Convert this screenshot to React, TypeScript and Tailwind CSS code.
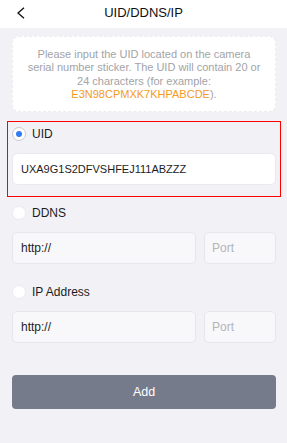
import React from "react";

function Radio({ checked }: { checked?: boolean }) {
  return checked ? (
    <span className="flex h-[14px] w-[14px] items-center justify-center rounded-full border border-[#c8c8cd] bg-white">
      <span className="h-[6px] w-[6px] rounded-full bg-[#2f7df6]" />
    </span>
  ) : (
    <span className="h-[14px] w-[14px] rounded-full border border-[#ececf0] bg-white" />
  );
}

function HostRow() {
  return (
    <div className="flex gap-2">
      <div className="flex h-[32px] flex-1 items-center rounded-[5px] border border-[#e6e6eb] bg-[#f8f8fa] px-2 text-[12px] text-[#1c1c1e]">
        http://
      </div>
      <div className="flex h-[32px] w-[72px] items-center rounded-[5px] border border-[#e6e6eb] bg-[#f8f8fa] px-[7px] text-[12px] text-[#b4b4b9]">
        Port
      </div>
    </div>
  );
}

export default function App() {
  return (
    <div className="min-h-[443px] bg-[#f2f2f6] font-['Liberation_Sans',Arial,sans-serif] text-[#1c1c1e]">
      {/* Header */}
      <div className="grid h-[28px] grid-cols-[40px_1fr_40px] items-center bg-white pb-[3px]">
        <svg className="ml-[16px] h-[12px] w-[10px]" viewBox="0 0 10 12" fill="none" stroke="#111" strokeWidth={1.3}>
          <polyline points="8,0.7 2,6 8,11.3" />
        </svg>
        <div className="text-center text-[13px] text-[#111]">UID/DDNS/IP</div>
        <div />
      </div>

      <div className="pl-3 pr-[11px] pt-2">
        {/* Info card */}
        <div className="rounded-[7px] border border-dashed border-[#ececf0] bg-white pb-[10px] pt-[11px] text-center text-[11px] leading-[13.3px] text-[#a3a3a8]">
          <div>Please input the UID located on the camera</div>
          <div>serial number sticker. The UID will contain 20 or</div>
          <div>24 characters (for example:</div>
          <div>
            <span className="text-[#f39b22]">E3N98CPMXK7KHPABCDE</span>).
          </div>
        </div>

        {/* UID */}
        <div className="mx-[-5px] mt-[9px] border border-[#ff0000] px-[4px] pb-[11px] pt-[5px]">
          <div className="flex h-[14px] items-center gap-[6px] text-[12px]">
            <Radio checked />
            <span>UID</span>
          </div>
          <div className="mt-[12px] flex h-[32px] items-center rounded-[5px] border border-[#e8e8ed] bg-white px-2 text-[11px] text-[#1c1c1e]">
            UXA9G1S2DFVSHFEJ111ABZZZ
          </div>
        </div>

        {/* DDNS */}
        <div className="mt-[9px] flex h-[14px] items-center gap-[6px] text-[12px]">
          <Radio />
          <span>DDNS</span>
        </div>
        <div className="mt-[12px]">
          <HostRow />
        </div>

        {/* IP Address */}
        <div className="mt-[21px] flex h-[14px] items-center gap-[6px] text-[12px]">
          <Radio />
          <span>IP Address</span>
        </div>
        <div className="mt-[12px]">
          <HostRow />
        </div>

        <button className="mt-[32px] flex h-[34px] w-full items-center justify-center rounded-[4px] bg-[#767b8b] text-[12.5px] text-white">
          Add
        </button>
      </div>
    </div>
  );
}
